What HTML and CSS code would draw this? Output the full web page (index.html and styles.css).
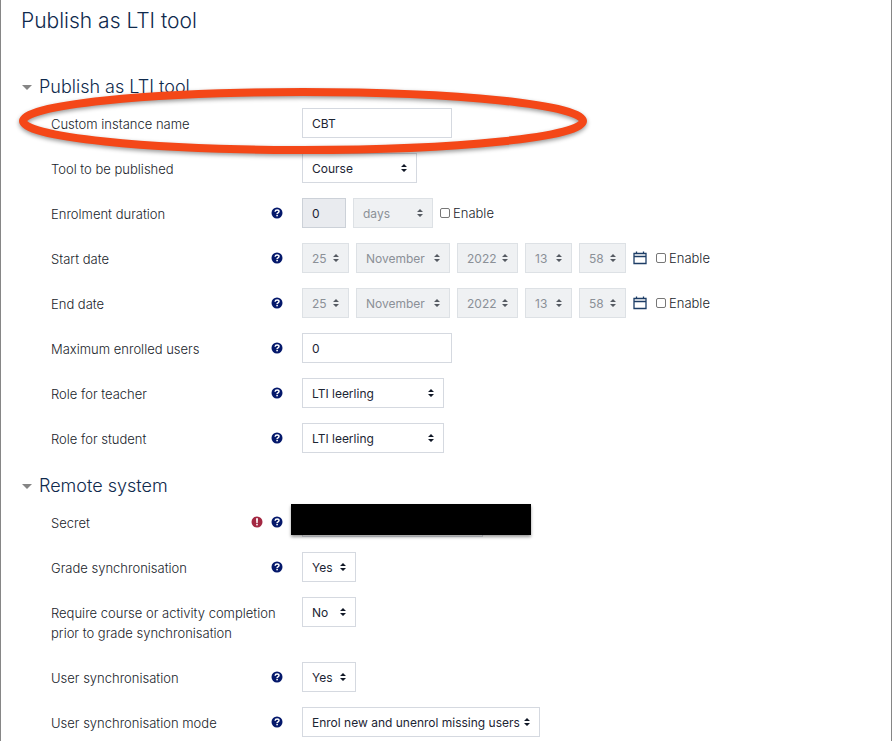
FILE: index.html
```html
<!DOCTYPE html>
<html lang="en">
<head>
	<meta charset="utf-8">
	<title>Publish as LTI tool</title>
	<link rel="stylesheet" href="styles.css">
</head>
<body>
	<svg class="sprite" aria-hidden="true">
		<symbol id="help" viewBox="0 0 12 12">
			<circle cx="6" cy="6" r="5.5" fill="#04186b"/>
			<path d="M4.1 4.7C4.2 3.5 5 2.9 6.1 2.9c1.1 0 1.9.6 1.9 1.6 0 1.5-1.9 1.3-1.9 2.5" fill="none" stroke="#fff" stroke-width="1.5"/>
			<rect x="5.3" y="7.8" width="1.6" height="1.5" fill="#fff"/>
		</symbol>
		<symbol id="required" viewBox="0 0 12 12">
			<circle cx="6" cy="6" r="5.5" fill="#a32842"/>
			<path d="M5 2.3h2l-.3 4.700H5.300z" fill="#fff"/>
			<rect x="5.200" y="7.8" width="1.6" height="1.6" fill="#fff"/>
		</symbol>
		<symbol id="calendar" viewBox="0 0 14 14">
			<path d="M1 2.500h12v10H1zM1 5.500h12M3.500.5v2.500M10.500.5v2.500" fill="none" stroke="#1d3d66" stroke-width="1.300"/>
		</symbol>
	</svg>
	<main>
		<h1>Publish as LTI tool</h1>
		<form>
			<section>
				<h2><span class="caret"></span>Publish as LTI tool</h2>
				<div class="row">
					<div class="name"><label for="name">Custom instance name</label></div>
					<div class="fields"><input type="text" class="text" id="name" value="CBT"></div>
				</div>
				<div class="row">
					<div class="name"><label for="tool">Tool to be published</label></div>
					<div class="fields"><select id="tool" class="w-tool"><option>Course</option></select></div>
				</div>
				<div class="row">
					<div class="name"><label for="duration">Enrolment duration</label><svg class="icon"><use href="#help"/></svg></div>
					<div class="fields">
						<input type="text" class="number" id="duration" value="0" disabled>
						<select class="w-unit" aria-label="Unit" disabled><option>days</option></select>
						<label class="enable"><input type="checkbox">Enable</label>
					</div>
				</div>
				<div class="row">
					<div class="name"><label for="startday">Start date</label><svg class="icon"><use href="#help"/></svg></div>
					<div class="fields">
						<select id="startday" class="w-short" disabled><option>25</option></select>
						<select class="w-month" aria-label="Start month" disabled><option>November</option></select>
						<select class="w-year" aria-label="Start year" disabled><option>2022</option></select>
						<select class="w-short" aria-label="Start hour" disabled><option>13</option></select>
						<select class="w-short" aria-label="Start minute" disabled><option>58</option></select>
						<a href="#" class="cal" aria-label="Calendar"><svg><use href="#calendar"/></svg></a>
						<label class="enable"><input type="checkbox">Enable</label>
					</div>
				</div>
				<div class="row">
					<div class="name"><label for="endday">End date</label><svg class="icon"><use href="#help"/></svg></div>
					<div class="fields">
						<select id="endday" class="w-short" disabled><option>25</option></select>
						<select class="w-month" aria-label="End month" disabled><option>November</option></select>
						<select class="w-year" aria-label="End year" disabled><option>2022</option></select>
						<select class="w-short" aria-label="End hour" disabled><option>13</option></select>
						<select class="w-short" aria-label="End minute" disabled><option>58</option></select>
						<a href="#" class="cal" aria-label="Calendar"><svg><use href="#calendar"/></svg></a>
						<label class="enable"><input type="checkbox">Enable</label>
					</div>
				</div>
				<div class="row">
					<div class="name"><label for="max">Maximum enrolled users</label><svg class="icon"><use href="#help"/></svg></div>
					<div class="fields"><input type="text" class="text" id="max" value="0"></div>
				</div>
				<div class="row">
					<div class="name"><label for="teacher">Role for teacher</label><svg class="icon"><use href="#help"/></svg></div>
					<div class="fields"><select id="teacher" class="w-role"><option>LTI leerling</option></select></div>
				</div>
				<div class="row">
					<div class="name"><label for="student">Role for student</label><svg class="icon"><use href="#help"/></svg></div>
					<div class="fields"><select id="student" class="w-role"><option>LTI leerling</option></select></div>
				</div>
				<svg class="marker" viewBox="0 0 580 80" aria-hidden="true">
					<ellipse cx="289" cy="37" rx="280" ry="29"/>
				</svg>
			</section>
			<section>
				<h2><span class="caret"></span>Remote system</h2>
				<div class="row">
					<div class="name"><label for="secret">Secret</label><svg class="icon"><use href="#required"/></svg><svg class="icon"><use href="#help"/></svg></div>
					<div class="fields">
						<input type="text" class="secret" id="secret">
						<span class="redacted"></span>
					</div>
				</div>
				<div class="row">
					<div class="name"><label for="grade">Grade synchronisation</label><svg class="icon"><use href="#help"/></svg></div>
					<div class="fields"><select id="grade" class="w-yesno"><option>Yes</option></select></div>
				</div>
				<div class="row">
					<div class="name"><label for="completion">Require course or activity completion prior to grade synchronisation</label></div>
					<div class="fields"><select id="completion" class="w-yesno"><option>No</option></select></div>
				</div>
				<div class="row">
					<div class="name"><label for="usersync">User synchronisation</label><svg class="icon"><use href="#help"/></svg></div>
					<div class="fields"><select id="usersync" class="w-yesno"><option>Yes</option></select></div>
				</div>
				<div class="row">
					<div class="name"><label for="mode">User synchronisation mode</label><svg class="icon"><use href="#help"/></svg></div>
					<div class="fields"><select id="mode" class="w-mode"><option>Enrol new and unenrol missing users</option></select></div>
				</div>
			</section>
		</form>
	</main>
</body>
</html>
```
FILE: styles.css
```css
* {
	box-sizing: border-box;
}
html {
	overflow: hidden;
}
body {
	margin: 0;
	background: #fff;
	color: #20242b;
	font-family: Inter, "Liberation Sans", sans-serif;
	font-size: 13px;
	font-weight: 300;
	line-height: 20px;
}
main {
	min-height: 100vh;
	padding: 6px 20px 4px;
	border: solid #868686;
	border-width: 0 1px;
}
.sprite {
	display: none;
}
h1, h2 {
	margin: 0;
	color: #0f2a4d;
	font-weight: 300;
	line-height: 30px;
}
h1 {
	margin-bottom: 36px;
	font-size: 21px;
}
h2 {
	display: flex;
	align-items: center;
	gap: 7px;
	margin-bottom: 6px;
	font-size: 18px;
}
.caret {
	border: solid transparent;
	border-width: 5px 5px 0;
	border-top-color: #858585;
	margin-left: 1px;
}
section {
	position: relative;
	margin-bottom: 18px;
}

/* form rows */
.row {
	display: grid;
	grid-template-columns: 232px 1fr;
	gap: 19px;
	margin: 0 0 15px 30px;
}
.name {
	display: flex;
	align-items: flex-start;
	gap: 8px;
	padding: 6px 0 4px;
}
.name label {
	flex: 1;
}
.icon {
	width: 12px;
	height: 12px;
	margin-top: 3px;
}
.fields {
	position: relative;
	display: flex;
	align-items: center;
	gap: 7px;
	height: 30px;
}

/* controls */
input, select {
	height: 30px;
	margin: 0;
	padding: 0 9px;
	border: 1px solid #d5d9e0;
	border-radius: 0;
	background-color: #fff;
	color: #1c2433;
	font: 12px Inter, "Liberation Sans", sans-serif;
}
select {
	appearance: none;
	background-image: url("data:image/svg+xml,%3Csvg xmlns='http://www.w3.org/2000/svg' viewBox='0 0 6 8'%3E%3Cpath fill='%23111827' d='M3 0L0 3h6zM3 8L0 5h6z'/%3E%3C/svg%3E");
	background-repeat: no-repeat;
	background-position: right 9px center;
	background-size: 6px 8px;
}
input:disabled {
	background-color: #e9ebef;
	border-color: #ccd1d8;
}
select:disabled {
	background-color: #eff1f3;
	background-image: url("data:image/svg+xml,%3Csvg xmlns='http://www.w3.org/2000/svg' viewBox='0 0 6 8'%3E%3Cpath fill='%23555a62' d='M3 0L0 3h6zM3 8L0 5h6z'/%3E%3C/svg%3E");
	border-color: #dde1e5;
	color: #8b9097;
	opacity: 1;
}
.text { width: 150px; }
.number { width: 44px; }
.secret { width: 181px; }
.w-tool { width: 115px; }
.w-unit { width: 80px; }
.w-short { width: 47px; }
.w-month { width: 94px; }
.w-year { width: 61px; }
.w-role { width: 142px; }
.w-yesno { width: 54px; }
.w-mode { width: 238px; }

.enable {
	display: flex;
	align-items: center;
	gap: 3px;
}
input[type=checkbox] {
	appearance: none;
	width: 10px;
	height: 10px;
	padding: 0;
	border: 1px solid #777;
	border-radius: 2px;
}
.cal {
	margin-right: 2px;
}
.cal svg {
	display: block;
	width: 14px;
	height: 14px;
}

/* drawn over the form */
.redacted {
	position: absolute;
	top: -3px;
	left: -11px;
	width: 240px;
	height: 31px;
	background: #000;
	box-shadow: 0 2px 3px rgba(0,0,0,0.4);
}
.marker {
	position: absolute;
	top: 12px;
	left: -7px;
	width: 580px;
	height: 80px;
	pointer-events: none;
	filter: drop-shadow(0 2px 2px rgba(0,0,0,0.4));
}
.marker ellipse {
	fill: none;
	stroke: #f44718;
	stroke-width: 8;
}
```
